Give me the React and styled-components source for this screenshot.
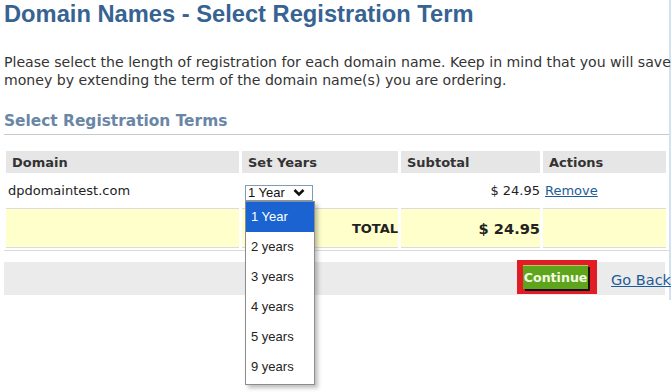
import React from 'react';
import styled, { createGlobalStyle } from 'styled-components';

const GlobalStyle = createGlobalStyle`
  body {
    margin: 0;
    background: #fff;
    font-family: "DejaVu Sans", Verdana, sans-serif;
  }
`;

const Screen = styled.div`
  min-height: 392px;
`;

const Page = styled.div`
  width: 665px;
  min-height: 300px;
  padding-left: 4px;
  border-right: 2px solid #d3e2f1;
  color: #222;
`;

const Title = styled.h1`
  margin: 0;
  padding-top: 0;
  font-family: "Liberation Sans", Arial, sans-serif;
  font-size: 23.7px;
  line-height: 28px;
  font-weight: bold;
  color: #376393;
`;

const Intro = styled.p`
  margin: 25px 0 0;
  font-size: 14.1px;
  line-height: 18px;
  color: #333;
  white-space: nowrap;
`;

const SectionTitle = styled.h2`
  margin: 22px 0 0;
  padding-bottom: 3px;
  font-size: 15.4px;
  line-height: 20px;
  font-weight: bold;
  color: #6a86a6;
  border-bottom: 1px solid #c8c8c8;
`;

const Table = styled.table`
  margin: 16px 0 0 -1px;
  width: 666px;
  table-layout: fixed;
  border-collapse: separate;
  border-spacing: 3px 0;
  font-size: 13px;
`;

const Head = styled.th`
  box-sizing: border-box;
  height: 22px;
  padding: 0 6px;
  text-align: left;
  background: #e6e6e6;
  color: #333;
  font-weight: bold;
  width: ${p => p.$w || 'auto'};
`;

const Cell = styled.td`
  height: ${p => (p.$total ? '38px' : '35px')};
  padding: 0 ${p => (p.$right ? '0' : '2px')};
  text-align: ${p => (p.$right ? 'right' : 'left')};
  vertical-align: middle;
  background: ${p => (p.$total ? '#ffffcc' : 'transparent')};
  border-bottom: 1px solid #dcdcdc;
  font-weight: ${p => (p.$bold ? 'bold' : 'normal')};
  font-size: ${p => (p.$big ? '14.6px' : '13px')};
  white-space: nowrap;
  position: relative;
`;

const Link = styled.a`
  color: #1d5c98;
  text-decoration: underline;
  cursor: pointer;
`;

const SelectBox = styled.div`
  position: relative;
  top: 2px;
  display: inline-flex;
  align-items: center;
  justify-content: space-between;
  box-sizing: border-box;
  width: 68px;
  height: 16px;
  margin-left: 1px;
  padding: 0 7px 0 2px;
  border: 1px solid #7f9bb8;
  font-family: "Liberation Sans", Arial, sans-serif;
  font-size: 13px;
  color: #111;
  vertical-align: middle;
`;

const Options = styled.ul`
  position: absolute;
  top: 15px;
  left: -1px;
  z-index: 5;
  width: 68px;
  margin: 0;
  padding: 0 0 2px;
  list-style: none;
  background: #fff;
  border: 1px solid #8d8d8d;
  box-shadow: 3px 3px 4px rgba(0, 0, 0, 0.25);
`;

const Option = styled.li`
  height: 30px;
  line-height: 30px;
  padding-left: 5px;
  font-family: "Liberation Sans", Arial, sans-serif;
  font-size: 13px;
  color: ${p => (p.$active ? '#fff' : '#222')};
  background: ${p => (p.$active ? '#1a63d0' : '#fff')};
`;

const BarWrap = styled.div`
  margin-top: 2px;
  padding-top: 11px;
  border-top: 1px solid #dcdcdc;
`;

const Bar = styled.div`
  display: flex;
  align-items: flex-start;
  justify-content: flex-end;
  gap: 14px;
  height: 33px;
  width: 661px;
  background: #ebebeb;
`;

const Highlight = styled.div`
  display: flex;
  margin-top: -2px;
  padding: 5px 6px 3px 6px;
  background: #e31b24;
`;

const Button = styled.button`
  box-sizing: border-box;
  width: 65px;
  height: 24px;
  padding: 0;
  border: none;
  border-top: 1px solid #a8d36a;
  background: #5ea51c;
  color: #f2fbe4;
  font-family: "DejaVu Sans", Verdana, sans-serif;
  font-size: 12.6px;
  font-weight: bold;
  box-shadow: 2px 2px 0 #111;
  margin: 0 3px 2px 0;
  cursor: pointer;
`;

const BackLink = styled(Link)`
  align-self: center;
  margin-top: 2px;
  font-size: 14.5px;
  margin-right: -6px;
`;

const Chevron = () => (
  <svg width="12" height="9" viewBox="0 0 12 9">
    <path d="M1.5 2 L6 6.5 L10.5 2" fill="none" stroke="#111" strokeWidth="2.6" />
  </svg>
);

const years = ['1 Year', '2 years', '3 years', '4 years', '5 years', '9 years'];

export default function App() {
  return (
    <Screen>
      <GlobalStyle />
      <Page>
        <Title>Domain Names - Select Registration Term</Title>
        <Intro>
          Please select the length of registration for each domain name. Keep in mind that you will save
          <br />
          money by extending the term of the domain name(s) you are ordering.
        </Intro>
        <SectionTitle>Select Registration Terms</SectionTitle>
        <Table>
          <thead>
            <tr>
              <Head $w="233px">Domain</Head>
              <Head $w="156px">Set Years</Head>
              <Head $w="139px">Subtotal</Head>
              <Head>Actions</Head>
            </tr>
          </thead>
          <tbody>
            <tr>
              <Cell>dpdomaintest.com</Cell>
              <Cell>
                <SelectBox>
                  1 Year
                  <Chevron />
                  <Options>
                    {years.map((y, i) => (
                      <Option key={y} $active={i === 0}>{y}</Option>
                    ))}
                  </Options>
                </SelectBox>
              </Cell>
              <Cell $right>$ 24.95</Cell>
              <Cell><Link>Remove</Link></Cell>
            </tr>
            <tr>
              <Cell $total />
              <Cell $total $right $bold>TOTAL</Cell>
              <Cell $total $right $bold $big>$ 24.95</Cell>
              <Cell $total />
            </tr>
          </tbody>
        </Table>
        <BarWrap>
          <Bar>
            <Highlight>
              <Button>Continue</Button>
            </Highlight>
            <BackLink>Go Back</BackLink>
          </Bar>
        </BarWrap>
      </Page>
    </Screen>
  );
}
